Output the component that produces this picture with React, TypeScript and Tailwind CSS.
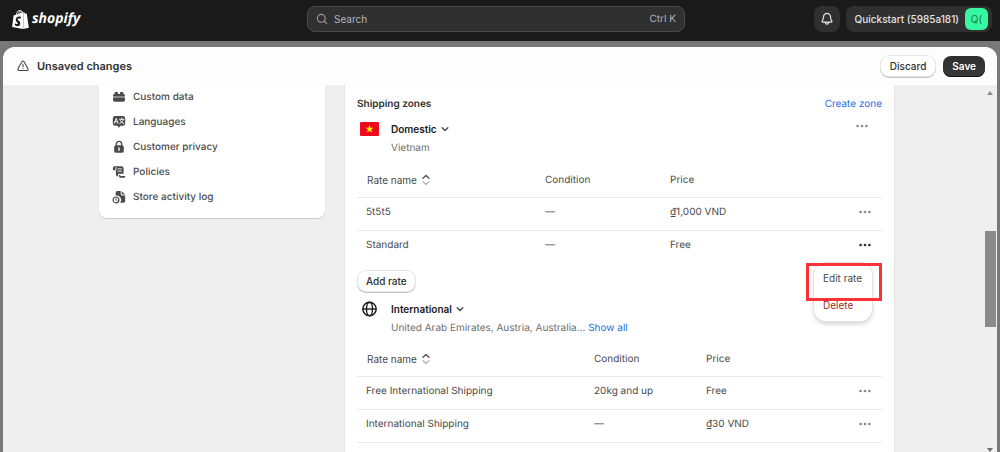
import type { ReactNode } from "react";
import { SiShopify } from "react-icons/si";

type Rate = { name: string; condition: string; price: string; menu?: boolean };

function Dots({ className = "text-[#8a8a8a]" }: { className?: string }) {
  return (
    <svg viewBox="0 0 14 14" className={`size-3.5 ${className}`} fill="currentColor" aria-hidden="true">
      <circle cx="2.6" cy="7" r="1.35" />
      <circle cx="7" cy="7" r="1.35" />
      <circle cx="11.4" cy="7" r="1.35" />
    </svg>
  );
}

function Chevron() {
  return (
    <svg viewBox="0 0 8 8" className="size-2" fill="none" stroke="#4a4a4a" strokeWidth="1.4" strokeLinecap="round" strokeLinejoin="round" aria-hidden="true">
      <path d="M1.2 2.8 4 5.5l2.8-2.7" />
    </svg>
  );
}

function SortIcon() {
  return (
    <svg viewBox="0 0 8 12" className="h-3 w-2" fill="none" strokeWidth="1.3" strokeLinecap="round" strokeLinejoin="round" aria-hidden="true">
      <path d="M1 4.2 4 1.4l3 2.8" stroke="#4a4a4a" />
      <path d="M1 7.8l3 2.8 3-2.8" stroke="#b5b5b5" />
    </svg>
  );
}

const glyph = "size-3.5 shrink-0";

const settings: { label: string; icon: ReactNode }[] = [
  {
    label: "Custom data",
    icon: (
      <svg viewBox="0 0 14 14" className={glyph} fill="#4a4a4a" aria-hidden="true">
        <path d="M2.6 4V3a.9.9 0 0 1 .9-.9h1.6A.9.9 0 0 1 6 3v1h2V3a.9.9 0 0 1 .9-.9h1.6a.9.9 0 0 1 .9.9v1A1.6 1.6 0 0 1 13 5.5v1.1H1V5.5A1.6 1.6 0 0 1 2.6 4Z" />
        <path d="M1 7.5h12v2.6a1.7 1.7 0 0 1-1.7 1.7H2.7A1.7 1.7 0 0 1 1 10.1Z" />
        <path d="M2 6.4h10v1H2z" opacity=".6" />
      </svg>
    ),
  },
  {
    label: "Languages",
    icon: (
      <svg viewBox="0 0 14 14" className={glyph} aria-hidden="true">
        <path d="M3.2 1h7.6A2.4 2.4 0 0 1 13.2 3.4v5A2.4 2.4 0 0 1 10.8 10.8H8.5L7 12.8 5.5 10.8H3.2A2.4 2.4 0 0 1 .8 8.4v-5A2.4 2.4 0 0 1 3.2 1Z" fill="#4a4a4a" />
        <path d="M2.4 8.3 4.2 3.4 6 8.3M3 6.8h2.4M7.5 4.3h4.4M9.7 3.2v1.1M11.3 4.5C10.9 6.3 9.5 7.7 7.8 8.4M8.3 5.5c.7 1.5 1.9 2.5 3.5 2.9" fill="none" stroke="#fff" strokeWidth=".9" strokeLinecap="round" strokeLinejoin="round" />
      </svg>
    ),
  },
  {
    label: "Customer privacy",
    icon: (
      <svg viewBox="0 0 14 14" className={glyph} aria-hidden="true">
        <path d="M4.3 6.3V4.1a2.7 2.7 0 0 1 5.4 0v2.2" fill="none" stroke="#4a4a4a" strokeWidth="1.4" />
        <rect x="2.2" y="5.3" width="9.6" height="7.5" rx="1.9" fill="#4a4a4a" />
        <path d="M7 8v2.2" stroke="#fff" strokeWidth="1.4" strokeLinecap="round" />
      </svg>
    ),
  },
  {
    label: "Policies",
    icon: (
      <svg viewBox="0 0 14 14" className={glyph} aria-hidden="true">
        <path d="M2.5 1.2h7.1a2 2 0 0 1 2 2v5.6H7.2A1.2 1.2 0 0 0 6 10v1.5A2.1 2.1 0 0 1 3.9 9.4V5.2H2.1A1.3 1.3 0 0 1 .8 3.9v-1a1.7 1.7 0 0 1 1.7-1.7Z" fill="#4a4a4a" />
        <path d="M3.9 2.6v2.4M5.9 3.9h3.6M5.9 6.2h3.6" stroke="#fff" strokeWidth=".9" strokeLinecap="round" />
        <path d="M7 9.9h.9c.2.7.6 1 1.2 1h4.3a1.9 1.9 0 0 1-1.9 1.9H8.3A1.7 1.7 0 0 1 7 11.5Z" fill="#4a4a4a" />
      </svg>
    ),
  },
  {
    label: "Store activity log",
    icon: (
      <svg viewBox="0 0 14 14" className={glyph} aria-hidden="true">
        <path d="M5.4 1h3.3v2.7A1.7 1.7 0 0 0 10.4 5.4h2.8v5.7a1.7 1.7 0 0 1-1.7 1.7H8A4.4 4.4 0 0 0 3.7 5.6V2.7A1.7 1.7 0 0 1 5.4 1Z" fill="#4a4a4a" />
        <path d="M9.7 1.2 13 4.4h-2.5a.8.8 0 0 1-.8-.8Z" fill="#4a4a4a" />
        <circle cx="4" cy="9.9" r="2.9" fill="#fff" stroke="#4a4a4a" strokeWidth="1.2" />
        <path d="M4 8.6V10l1 .5" fill="none" stroke="#4a4a4a" strokeWidth=".9" strokeLinecap="round" />
      </svg>
    ),
  },
];

const domesticRates: Rate[] = [
  { name: "5t5t5", condition: "—", price: "₫1,000 VND" },
  { name: "Standard", condition: "—", price: "Free", menu: true },
];

const internationalRates: Rate[] = [
  { name: "Free International Shipping", condition: "20kg and up", price: "Free" },
  { name: "International Shipping", condition: "—", price: "₫30 VND" },
];

function RateMenu() {
  return (
    <div className="absolute top-8 right-2.5 z-10 w-[58px] rounded-xl bg-white shadow-[0_0_0_1px_#e3e3e3,0_3px_5px_rgba(0,0,0,0.18)]">
      <div className="flex flex-col py-0.5 text-left">
        <button type="button" className="h-[27px] pl-[9px] text-left text-[#4a4a4a]">Edit rate</button>
        <button type="button" className="h-[27px] pl-[9px] text-left text-[#a8291f]">Delete</button>
      </div>
      <div className="pointer-events-none absolute top-0 -right-2.5 -left-2 h-[38px] border-3 border-[#fb3238]" />
    </div>
  );
}

function RateTable({ label, rates, nameCol, conditionCol, closed }: { label: string; rates: Rate[]; nameCol: string; conditionCol: string; closed?: boolean }) {
  return (
    <table aria-label={label} className="w-full table-fixed border-collapse text-left text-[#4a4a4a]">
      <thead>
        <tr className="h-[34px] border-b border-[#ebebeb]">
          <th scope="col" className={`${nameCol} pl-2.5 font-normal`}>
            <button type="button" className="flex items-center gap-[5px]">
              Rate name
              <SortIcon />
            </button>
          </th>
          <th scope="col" className={`${conditionCol} font-normal`}>Condition</th>
          <th scope="col" className="font-normal">Price</th>
          <th scope="col" className="w-9" aria-label="Actions" />
        </tr>
      </thead>
      <tbody>
        {rates.map((rate, i) => (
          <tr key={rate.name} className={i < rates.length - 1 || closed ? "h-[33px] border-b border-[#ebebeb]" : "h-[33px]"}>
            <td className="pb-[3px] pl-[9px]">{rate.name}</td>
            <td className="pb-[3px]">{rate.condition}</td>
            <td className="pb-[3px]">{rate.price}</td>
            <td className="relative pb-[3px]">
              <button type="button" aria-label={`Actions for ${rate.name}`} className="ml-3 block">
                <Dots className={rate.menu ? "text-[#303030]" : "text-[#8a8a8a]"} />
              </button>
              {rate.menu && <RateMenu />}
            </td>
          </tr>
        ))}
      </tbody>
    </table>
  );
}

const lightButton = "rounded-lg bg-white font-medium text-[#303030] shadow-[0_0_0_1px_#e6e6e6,0_1px_0_1px_#c4c4c4]";

export default function App() {
  return (
    <div className="flex h-screen flex-col overflow-hidden bg-[#787878] font-['Inter',sans-serif] text-[10px] leading-4 text-[#303030] [text-rendering:geometricPrecision]">
      <header className="grid h-[41px] shrink-0 grid-cols-[1fr_378px_1fr] items-center bg-[#1a1a1a] pr-2 pb-[3px]">
        <a href="#home" className="flex items-center gap-0.5 pl-[11px] text-white" aria-label="Shopify home">
          <SiShopify className="size-[19px]" aria-hidden="true" />
          <span className="font-['Open_Sans',sans-serif] text-[14px] leading-5 font-bold italic">shopify</span>
        </a>
        <label className="flex h-[26px] items-center gap-1.5 rounded-lg border border-[#4a4a4a] bg-[#303030] px-2 text-[#b5b5b5]">
          <svg viewBox="0 0 12 12" className="size-3" fill="none" stroke="#a0a0a0" strokeWidth="1.1" strokeLinecap="round" aria-hidden="true">
            <circle cx="5.3" cy="5.3" r="3.9" />
            <path d="m8.2 8.2 2.5 2.5" />
          </svg>
          <input type="search" aria-label="Search" placeholder="Search" className="min-w-0 flex-1 bg-transparent outline-none placeholder:text-[#b5b5b5]" />
          <span>Ctrl K</span>
        </label>
        <div className="flex items-center justify-end gap-1.5">
          <button type="button" aria-label="Notifications" className="grid size-[26px] place-items-center rounded-lg bg-[#303030]">
            <svg viewBox="0 0 14 14" className="size-3.5" fill="none" stroke="#e3e3e3" strokeWidth="1.2" strokeLinecap="round" strokeLinejoin="round" aria-hidden="true">
              <path d="M7 1.4A3.5 3.5 0 0 0 3.5 4.9c0 2.3-.5 2.9-1.3 4-.4.6-.1 1.2.6 1.2h8.4c.7 0 1-.6.6-1.2-.8-1.1-1.3-1.7-1.3-4A3.5 3.5 0 0 0 7 1.4Z" />
              <path d="M5.3 10.3a1.7 1.9 0 0 0 3.4 0" />
            </svg>
          </button>
          <button type="button" className="flex h-[26px] items-center gap-1.5 rounded-lg bg-[#303030] pr-1 pl-[9px] font-medium text-[#e3e3e3]">
            Quickstart (5985a181)
            <span className="grid h-[22px] w-[23px] place-items-center rounded-md bg-[#36f8a0] font-normal text-[#1d7a4f]">Q(</span>
          </button>
        </div>
      </header>

      <div className="mx-[3px] mt-1.5 flex min-h-0 flex-1 flex-col overflow-hidden rounded-t-xl bg-[#efefef]">
        <div className="flex h-[38px] shrink-0 items-center gap-2 bg-[#fdfdfd] pr-3 pl-3.5">
          <svg viewBox="0 0 12 12" className="size-3" fill="none" stroke="#4a4a4a" strokeWidth="1.1" strokeLinecap="round" strokeLinejoin="round" aria-hidden="true">
            <path d="M4.9 1.7 1.1 8.6c-.5.9.1 1.9 1.1 1.9h7.6c1 0 1.6-1 1.1-1.9L7.1 1.7a1.25 1.25 0 0 0-2.2 0Z" />
            <path d="M6 4.2v2.5M6 8.5v.1" />
          </svg>
          <h1 className="flex-1 text-[11px] font-semibold">Unsaved changes</h1>
          <button type="button" className={`h-5 px-[9px] ${lightButton}`}>Discard</button>
          <button type="button" className="h-[21px] rounded-lg bg-linear-to-b from-[#2e2e2e] to-[#3a3a3a] px-[9px] font-semibold text-white shadow-[inset_0_-1px_0_#111]">Save</button>
        </div>

        <div className="flex min-h-0 flex-1">
          <div className="flex min-w-0 flex-1 items-start gap-5 overflow-hidden pr-[90px] pl-24">
            <nav aria-label="Settings" className="-mt-px w-[226px] shrink-0 rounded-b-lg bg-white pb-[9px] shadow-[0_1px_1px_rgba(0,0,0,0.15)]">
              <ul>
                {settings.map((item) => (
                  <li key={item.label}>
                    <a href="#settings" className="flex h-[25px] items-center gap-[7px] pl-[13px] font-medium text-[#4a4a4a]">
                      {item.icon}
                      {item.label}
                    </a>
                  </li>
                ))}
              </ul>
            </nav>

            <main className="min-w-0 flex-1 self-stretch bg-white pt-[11px] pr-3 pl-3 shadow-[0_0_1px_rgba(0,0,0,0.25)]">
              <div className="flex items-center justify-between">
                <h2 className="font-semibold">Shipping zones</h2>
                <a href="#create-zone" className="text-[#1b6fe0]">Create zone</a>
              </div>

              <section aria-label="Domestic" className="pt-[9px]">
                <div className="flex items-start pl-[3px]">
                  <svg viewBox="0 0 20 14" className="mt-px h-3.5 w-5" role="img" aria-label="Vietnam flag">
                    <rect width="19" height="14" rx="1" fill="#ee0a1c" />
                    <path d="m9.5 2.9 1 2.9h3l-2.4 1.8.9 2.9L9.5 8.7 7 10.500l.9-2.900L5.500 5.800h3Z" fill="#ffee00" />
                  </svg>
                  <div className="ml-[11px] flex-1">
                    <button type="button" className="flex items-center gap-1 font-semibold text-[#1a1a1a]">
                      Domestic
                      <Chevron />
                    </button>
                    <p className="mt-[3px] text-[#707070]">Vietnam</p>
                  </div>
                  <button type="button" aria-label="Domestic zone actions" className="-mt-0.5 mr-[13px]">
                    <Dots />
                  </button>
                </div>
                <div className="pt-[7px]">
                  <RateTable label="Domestic rates" rates={domesticRates} nameCol="w-[188px]" conditionCol="w-[125px]" />
                </div>
                <button type="button" className={`mt-2 ml-px h-5 px-2 ${lightButton}`}>Add rate</button>
              </section>

              <section aria-label="International" className="pt-2.5">
                <div className="flex items-start pl-[5px]">
                  <svg viewBox="0 0 16 16" className="size-4" fill="none" stroke="#1a1a1a" strokeWidth="1.4" aria-hidden="true">
                    <circle cx="7.5" cy="8" r="6.7" />
                    <ellipse cx="7.5" cy="8" rx="3" ry="6.7" />
                    <path d="M.8 8h13.4" />
                  </svg>
                  <div className="ml-[13px] flex-1">
                    <button type="button" className="flex items-center gap-1 font-semibold text-[#1a1a1a]">
                      International
                      <Chevron />
                    </button>
                    <p className="mt-[3px] text-[#707070]">
                      United Arab Emirates, Austria, Australia... <a href="#show-all" className="text-[#1b6fe0]">Show all</a>
                    </p>
                  </div>
                </div>
                <div className="pt-1.5">
                  <RateTable label="International rates" rates={internationalRates} nameCol="w-[237px]" conditionCol="w-[112px]" closed />
                </div>
              </section>
            </main>
          </div>

          <div aria-hidden="true" className="mr-px flex w-3 shrink-0 flex-col items-center pt-1.5">
            <svg viewBox="0 0 6 4" className="h-1 w-1.5" fill="#8a8a8a"><path d="M0 4h6L3 0Z" /></svg>
            <div className="mt-[136px] mb-auto h-24 w-[11px] bg-[#8b8b8b]" />
            <svg viewBox="0 0 6 4" className="h-1 w-1.5" fill="#707070"><path d="M0 0h6L3 4Z" /></svg>
          </div>
        </div>
      </div>
    </div>
  );
}
